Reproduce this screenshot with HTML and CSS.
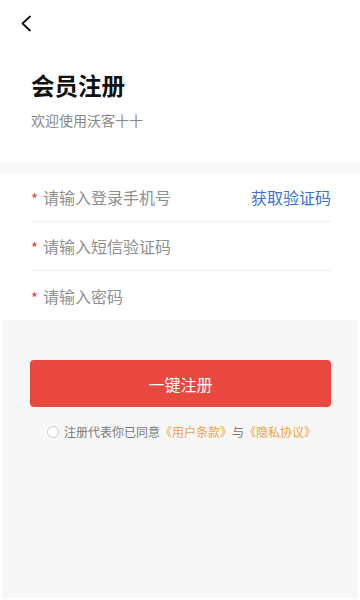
FILE: index.html
```html
<!DOCTYPE html>
<html lang="zh-CN">
<head>
<meta charset="utf-8">
<link rel="stylesheet" href="styles.css">
</head>
<body>
<div class="page">
  <header class="top">
    <div class="back">
      <svg width="12" height="17" viewBox="0 0 12 17"><path d="M10 1.5 L2.5 8.5 L10 15.5" fill="none" stroke="#111" stroke-width="1.8" stroke-linecap="round" stroke-linejoin="round"/></svg>
    </div>
    <h1 class="title">会员注册</h1>
    <p class="sub">欢迎使用沃客十十</p>
  </header>
  <div class="band"></div>
  <form class="form">
    <div class="row"><span class="star">*</span><span class="ph">请输入登录手机号</span><span class="code">获取验证码</span></div>
    <div class="row"><span class="star">*</span><span class="ph">请输入短信验证码</span></div>
    <div class="row last"><span class="star">*</span><span class="ph">请输入密码</span></div>
  </form>
  <section class="bottom">
    <div class="btn">一键注册</div>
    <div class="agree"><span class="radio"></span><span>注册代表你已同意</span><span class="link">《用户条款》</span><span>与</span><span class="link">《隐私协议》</span></div>
  </section>
</div>
</body>
</html>
```
FILE: styles.css
```css
* { box-sizing: border-box; margin: 0; padding: 0; }
html, body { width: 360px; height: 600px; background: #fff; }
body { font-family: "Noto Sans CJK SC", "Noto Sans", sans-serif; }
.page { display: flex; flex-direction: column; height: 600px; }
.top { padding: 0 0 0 31px; height: 163px; }
.back { height: 50px; padding-top: 15px; margin-left: -11px; }
.back svg { display: block; }
.title { font-size: 23.5px; font-weight: 700; color: #111; line-height: 30px; margin-top: 20px; }
.sub { font-size: 14px; color: #888; line-height: 20px; margin-top: 10px; }
.band { height: 10px; background: #f7f7f7; }
.form { background: #fff; padding: 0 29px 0 31px; }
.row { display: flex; align-items: center; height: 49px; border-bottom: 1px solid #f0f0f0; }
.row.last { border-bottom: none; height: 49px; }
.star { color: #e0453c; font-size: 15px; width: 12px; line-height: 16px; padding-top: 4px; }
.ph { font-size: 16px; color: #8f8f8f; flex: 1; }
.code { font-size: 16px; color: #3c72d4; }
.bottom { flex: 1; background: #f7f7f7; padding: 40px 27px 0 28px; margin: 0 2px 2px; }
.btn { height: 47px; border-radius: 4px; background: #e84840; color: #fff; font-size: 16px; display: flex; align-items: center; justify-content: center; }
.agree { display: flex; align-items: center; justify-content: center; margin-top: 17px; font-size: 12px; color: #777; line-height: 16px; padding-left: 2px; }
.radio { width: 12px; height: 12px; border: 1px solid #ccc; border-radius: 50%; background: #fff; margin-right: 5px; }
.link { color: #eba347; }
```
